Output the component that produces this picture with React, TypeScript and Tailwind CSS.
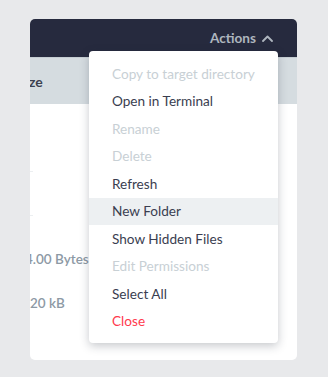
import React from "react";

const items: { label: string; kind: "disabled" | "normal" | "active" | "danger" }[] = [
  { label: "Copy to target directory", kind: "disabled" },
  { label: "Open in Terminal", kind: "normal" },
  { label: "Rename", kind: "disabled" },
  { label: "Delete", kind: "disabled" },
  { label: "Refresh", kind: "normal" },
  { label: "New Folder", kind: "active" },
  { label: "Show Hidden Files", kind: "normal" },
  { label: "Edit Permissions", kind: "disabled" },
  { label: "Select All", kind: "normal" },
  { label: "Close", kind: "danger" },
];

export default function App() {
  return (
    <div
      className="w-[328px] h-[377px] bg-[#e8e9eb] pt-[19px] pl-[30px] overflow-hidden"
      style={{ fontFamily: "Lato, 'Open Sans', sans-serif" }}
    >
      <div className="relative w-[267px] h-[341px] bg-white rounded-[5px] overflow-hidden">
        <div className="h-[38px] bg-[#262a3e] flex items-center justify-end pr-[24px] gap-[6px]">
          <span className="text-[13.6px] font-bold text-[#aeb6bf]">Actions</span>
          <svg width="11" height="7" viewBox="0 0 11 7" fill="none">
            <path d="M1 6L5.5 1.5L10 6" stroke="#aeb6bf" strokeWidth="1.8" strokeLinecap="round" strokeLinejoin="round" />
          </svg>
        </div>
        <div className="h-[47px] bg-[#d5dce0] border-t border-[#c5cdd2] flex items-center">
          <span className="text-[14px] font-bold text-[#3c4150] -ml-[1px]">ze</span>
        </div>
        <div className="flex flex-col">
          <div className="h-[68px] border-b border-[#eceff1] w-[3px]" />
          <div className="h-[44px] border-b border-[#eceff1] w-[3px]" />
          <div className="h-[21px]" />
          <div className="h-[44px] flex items-center">
            <span className="text-[13.5px] font-semibold text-[#8d99a5] -ml-[5px]">4.00 Bytes</span>
          </div>
          <div className="h-[44px] flex items-center">
            <span className="text-[13.5px] font-semibold text-[#8d99a5]">20 kB</span>
          </div>
        </div>

        <div className="absolute left-[59px] top-[32px] w-[189px] bg-white rounded-[4px] pt-[9px] pb-[8px] shadow-[0_3px_10px_rgba(30,40,55,0.25)]">
          {items.map((it) => (
            <div
              key={it.label}
              className={
                "h-[27.5px] flex items-center pl-[23px] text-[13.6px] " +
                (it.kind === "disabled"
                  ? "text-[#c8d0d5]"
                  : it.kind === "danger"
                  ? "text-[#ff3a4d]"
                  : it.kind === "active"
                  ? "text-[#3a3e50] bg-[#edf0f2]"
                  : "text-[#3a3e50]")
              }
            >
              {it.label}
            </div>
          ))}
        </div>
      </div>
    </div>
  );
}
